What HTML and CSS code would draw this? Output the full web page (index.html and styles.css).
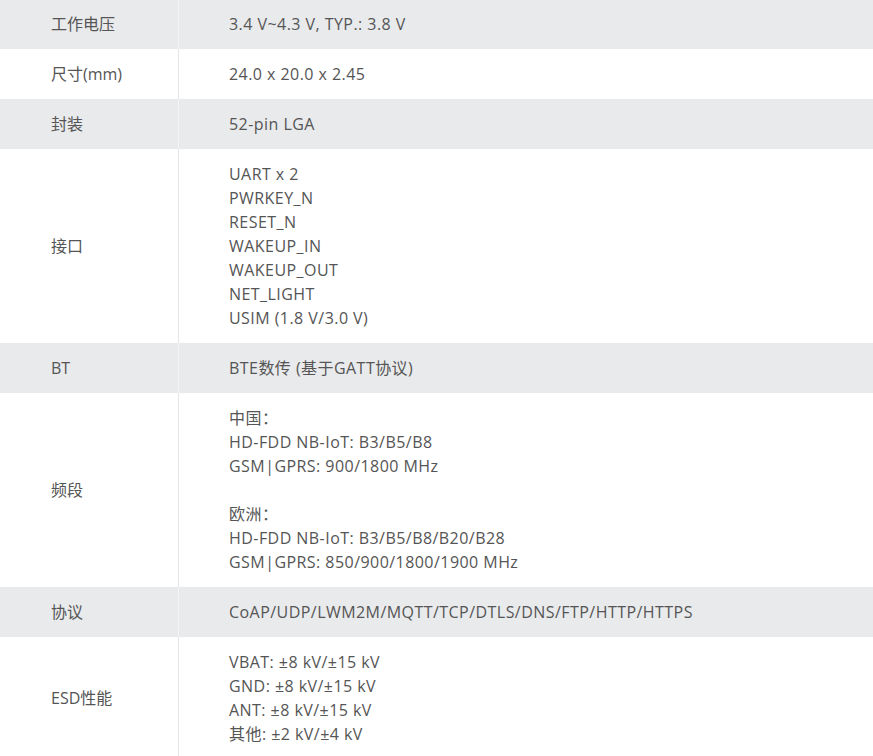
FILE: index.html
```html
<!DOCTYPE html>
<html lang="zh-CN">
<head>
<meta charset="utf-8">
<title>参数</title>
<link rel="stylesheet" href="styles.css">
</head>
<body>
<table class="spec">
  <tbody>
    <tr class="odd"><td class="k">工作电压</td><td class="v">3.4 V~4.3 V, TYP.: 3.8 V</td></tr>
    <tr class="even"><td class="k">尺寸(mm)</td><td class="v">24.0 x 20.0 x 2.45</td></tr>
    <tr class="odd"><td class="k">封装</td><td class="v">52-pin LGA</td></tr>
    <tr class="even"><td class="k">接口</td><td class="v">UART x 2<br>PWRKEY_N<br>RESET_N<br>WAKEUP_IN<br>WAKEUP_OUT<br>NET_LIGHT<br>USIM (1.8 V/3.0 V)</td></tr>
    <tr class="odd"><td class="k">BT</td><td class="v">BTE数传 (基于GATT协议)</td></tr>
    <tr class="even"><td class="k">频段</td><td class="v">中国<span class="punct">：</span><br>HD-FDD NB-IoT: B3/B5/B8<br>GSM|GPRS: 900/1800 MHz<br><br>欧洲<span class="punct">：</span><br>HD-FDD NB-IoT: B3/B5/B8/B20/B28<br>GSM|GPRS: 850/900/1800/1900 MHz</td></tr>
    <tr class="odd"><td class="k">协议</td><td class="v">CoAP/UDP/LWM2M/MQTT/TCP/DTLS/DNS/FTP/HTTP/HTTPS</td></tr>
    <tr class="even"><td class="k">ESD性能</td><td class="v">VBAT: ±8 kV/±15 kV<br>GND: ±8 kV/±15 kV<br>ANT: ±8 kV/±15 kV<br>其他: ±2 kV/±4 kV</td></tr>
  </tbody>
</table>
</body>
</html>
```

FILE: styles.css
```css
html, body {
  margin: 0;
  padding: 0;
  background: #ffffff;
}
body {
  font-family: "Open Sans", "Noto Sans CJK SC", sans-serif;
  font-size: 16px;
  line-height: 24px;
  color: #555555;
}
.spec {
  width: 100%;
  border-collapse: collapse;
  margin-top: -1px;
}
.spec td {
  padding: 13px 0;
  vertical-align: middle;
}
.spec .k {
  width: 127px;
  padding-left: 51px;
  border-right: 1px solid #e4e4e4;
}
.spec .v {
  padding-left: 50px;
  letter-spacing: 0.45px;
}
.punct {
  font-family: "Noto Sans CJK TC", sans-serif;
  line-height: 1;
}
.spec .odd {
  background: #e9eaec;
}
.spec .odd .k {
  border-right-color: #f4f4f4;
}
.spec .even {
  background: #ffffff;
}
```
